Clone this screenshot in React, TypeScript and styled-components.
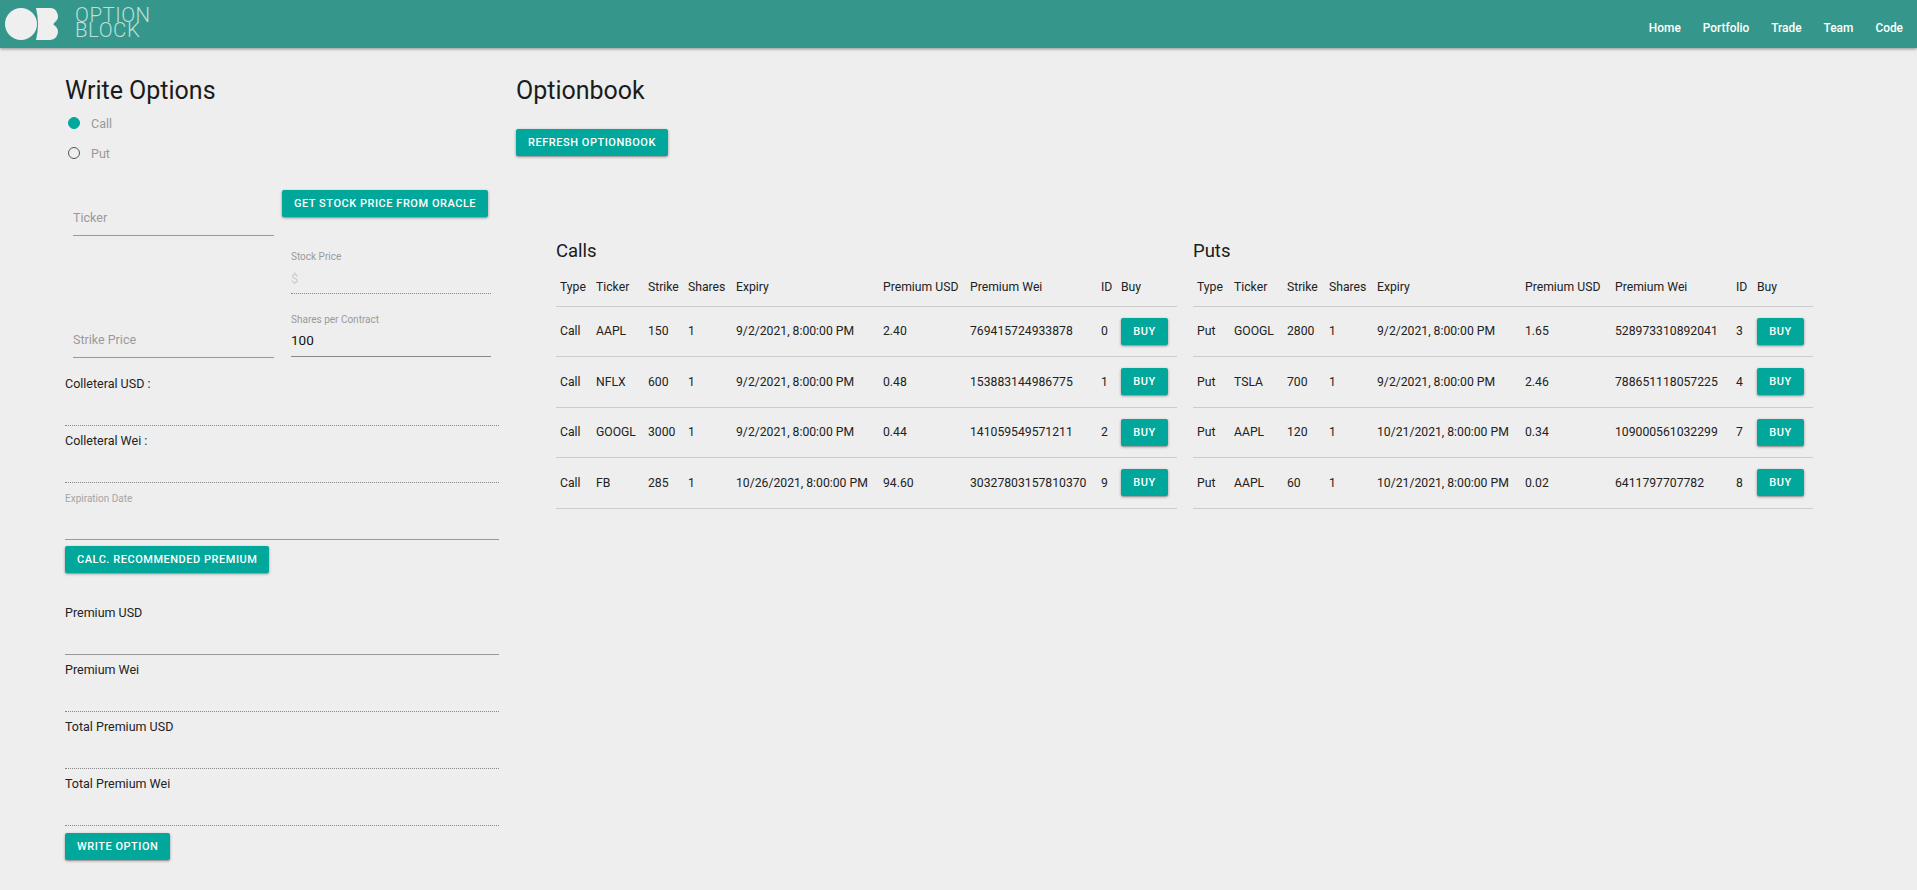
import React from 'react';
import styled, {createGlobalStyle} from "styled-components";

type OptionRow = {
    type: string
    ticker: string
    strike: string
    expiry: string
    usd: string
    wei: string
    id: number
}

const callRows: OptionRow[] = [
    {type: "Call", ticker: "AAPL", strike: "150", expiry: "9/2/2021, 8:00:00 PM", usd: "2.40", wei: "769415724933878", id: 0},
    {type: "Call", ticker: "NFLX", strike: "600", expiry: "9/2/2021, 8:00:00 PM", usd: "0.48", wei: "153883144986775", id: 1},
    {type: "Call", ticker: "GOOGL", strike: "3000", expiry: "9/2/2021, 8:00:00 PM", usd: "0.44", wei: "141059549571211", id: 2},
    {type: "Call", ticker: "FB", strike: "285", expiry: "10/26/2021, 8:00:00 PM", usd: "94.60", wei: "30327803157810370", id: 9},
]

const putRows: OptionRow[] = [
    {type: "Put", ticker: "GOOGL", strike: "2800", expiry: "9/2/2021, 8:00:00 PM", usd: "1.65", wei: "528973310892041", id: 3},
    {type: "Put", ticker: "TSLA", strike: "700", expiry: "9/2/2021, 8:00:00 PM", usd: "2.46", wei: "788651118057225", id: 4},
    {type: "Put", ticker: "AAPL", strike: "120", expiry: "10/21/2021, 8:00:00 PM", usd: "0.34", wei: "109000561032299", id: 7},
    {type: "Put", ticker: "AAPL", strike: "60", expiry: "10/21/2021, 8:00:00 PM", usd: "0.02", wei: "6411797707782", id: 8},
]

const callCols = [36, 52, 40, 48, 147, 87, 131, 20, 60]
const putCols = [37, 53, 42, 48, 148, 90, 121, 21, 60]
const headers = ["Type", "Ticker", "Strike", "Shares", "Expiry", "Premium USD", "Premium Wei", "ID", "Buy"]

const OptionTable: React.FC<{title: string, rows: OptionRow[], cols: number[]}> = ({title, rows, cols}) => {
    return (
        <TableBlock>
            <TableTitle>{title}</TableTitle>
            <StTable>
                <colgroup>
                    {cols.map((w, i) => <col key={i} style={{width: w}}/>)}
                </colgroup>
                <thead>
                <tr>
                    {headers.map(h => <HeadCell key={h}>{h}</HeadCell>)}
                </tr>
                </thead>
                <tbody>
                {rows.map(r => (
                    <tr key={r.id}>
                        <Cell>{r.type}</Cell>
                        <Cell>{r.ticker}</Cell>
                        <Cell>{r.strike}</Cell>
                        <Cell>1</Cell>
                        <Cell>{r.expiry}</Cell>
                        <Cell>{r.usd}</Cell>
                        <Cell>{r.wei}</Cell>
                        <Cell>{r.id}</Cell>
                        <Cell><BuyButton>Buy</BuyButton></Cell>
                    </tr>
                ))}
                </tbody>
            </StTable>
        </TableBlock>
    );
};

const App: React.FC = () => {
    return (
        <>
            <GlobalStyle/>
            <Header>
                <Brand>
                    <svg width="60" height="44" viewBox="0 0 60 44" fill="#efefef">
                        <circle cx="21" cy="22" r="16"/>
                        <path d="M36 6 H49.5 a8 8 0 0 1 5 14.5 q-1 1 -1 1.5 q0 .5 1 1.5 a8 8 0 0 1 -5 14.5 H36 q2 -8 2 -16 q0 -8 -2 -16 Z"/>
                    </svg>
                    <BrandText>OPTION<br/>BLOCK</BrandText>
                </Brand>
                <Nav>
                    <NavLink>Home</NavLink>
                    <NavLink>Portfolio</NavLink>
                    <NavLink>Trade</NavLink>
                    <NavLink>Team</NavLink>
                    <NavLink>Code</NavLink>
                </Nav>
            </Header>
            <Main>
                <WriteColumn>
                    <PageTitle>Write Options</PageTitle>
                    <RadioRow>
                        <RadioDot $checked/>
                        <RadioLabel>Call</RadioLabel>
                    </RadioRow>
                    <RadioRow>
                        <RadioDot/>
                        <RadioLabel>Put</RadioLabel>
                    </RadioRow>
                    <InputGrid>
                        <InputStack>
                            <InputField $height={45}><Placeholder>Ticker</Placeholder></InputField>
                            <InputField $height={45}><Placeholder>Strike Price</Placeholder></InputField>
                        </InputStack>
                        <ButtonStack>
                            <Button>Get Stock Price From Oracle</Button>
                            <SmallField $dotted>
                                <SmallLabel>Stock Price</SmallLabel>
                                <Adornment>$</Adornment>
                            </SmallField>
                            <SmallField>
                                <SmallLabel>Shares per Contract</SmallLabel>
                                <FieldValue>100</FieldValue>
                            </SmallField>
                        </ButtonStack>
                    </InputGrid>
                    <ResultField $dotted $first>Colleteral USD :</ResultField>
                    <ResultField $dotted>Colleteral Wei :</ResultField>
                    <DateField>Expiration Date</DateField>
                    <Button>Calc. Recommended Premium</Button>
                    <ResultField $afterButton>Premium USD</ResultField>
                    <ResultField $dotted>Premium Wei</ResultField>
                    <ResultField $dotted>Total Premium USD</ResultField>
                    <ResultField $dotted>Total Premium Wei</ResultField>
                    <FooterButton>Write Option</FooterButton>
                </WriteColumn>
                <BookColumn>
                    <PageTitle>Optionbook</PageTitle>
                    <RefreshButton>Refresh Optionbook</RefreshButton>
                    <Tables>
                        <OptionTable title="Calls" rows={callRows} cols={callCols}/>
                        <OptionTable title="Puts" rows={putRows} cols={putCols}/>
                    </Tables>
                </BookColumn>
            </Main>
        </>
    );
};

export default App;

const GlobalStyle = createGlobalStyle`
  html, body {
    margin: 0;
    padding: 0;
    background: #eeeeee;
    font-family: Roboto, "Liberation Sans", sans-serif;
    color: #1b1b1b;
  }

  * {
    box-sizing: border-box;
  }
`

const Header = styled.header`
  height: 48px;
  background: #35978b;
  box-shadow: 0 1px 3px rgba(0, 0, 0, .4);
  display: flex;
  justify-content: space-between;
  align-items: center;
  padding-right: 14px;
`
const Brand = styled.div`
  display: flex;
  align-items: center;
  gap: 15px;

  svg {
    filter: blur(.4px);
  }
`
const BrandText = styled.div`
  margin-top: -2px;
  font-size: 20.5px;
  font-weight: 300;
  letter-spacing: .5px;
  line-height: 15px;
  color: #bcdfd9;
`
const Nav = styled.nav`
  display: flex;
  gap: 22px;
  padding-top: 7px;
`
const NavLink = styled.span`
  font-size: 11.9px;
  font-weight: 500;
  color: #fff;
`

const Main = styled.main`
  display: flex;
  gap: 17px;
  padding: 0 0 31px 65px;
`
const WriteColumn = styled.section`
  width: 434px;
  flex: none;
  display: flex;
  flex-direction: column;
  align-items: flex-start;
`
const PageTitle = styled.h2`
  margin: 0;
  padding-top: 28px;
  height: 60px;
  font-size: 25px;
  line-height: 30px;
  font-weight: 400;
`
const RadioRow = styled.div`
  height: 30px;
  padding-left: 3px;
  display: flex;
  align-items: center;
  gap: 11px;
`
const RadioDot = styled.span<{ $checked?: boolean }>`
  width: 12px;
  height: 12px;
  border-radius: 50%;
  border: 1px solid ${p => p.$checked ? "#00a79a" : "#555"};
  background: ${p => p.$checked ? "#00a79a" : "transparent"};
`
const RadioLabel = styled.span`
  font-size: 12.5px;
  color: #999;
`
const InputGrid = styled.div`
  margin-top: 22px;
  display: flex;
  gap: 8px;
  padding-left: 8px;
  height: 168px;
`
const InputStack = styled.div`
  width: 201px;
  display: flex;
  flex-direction: column;
  justify-content: flex-end;
  gap: 77px;
`
const InputField = styled.div<{ $height: number }>`
  height: ${p => p.$height}px;
  border-bottom: 1px solid #999;
  display: flex;
  align-items: flex-end;
  padding-bottom: 10px;
`
const Placeholder = styled.span`
  font-size: 12.5px;
  color: #9a9a9a;
`
const ButtonStack = styled.div`
  width: 209px;
  display: flex;
  flex-direction: column;
  align-items: flex-start;
`
const SmallField = styled.div<{ $dotted?: boolean }>`
  width: 200px;
  height: 63px;
  margin-left: 9px;
  border-bottom: 1px ${p => p.$dotted ? "dotted" : "solid"} #888;
  display: flex;
  flex-direction: column;

  &:nth-child(2) {
    height: 77px;
    padding-top: 34px;
  }

  &:nth-child(3) {
    padding-top: 20px;
  }
`
const SmallLabel = styled.span`
  font-size: 10px;
  line-height: 12px;
  color: #9a9a9a;
`
const Adornment = styled.span`
  margin-top: 8px;
  font-size: 13px;
  line-height: 16px;
  color: #ccc;
`
const FieldValue = styled.span`
  margin-top: 6px;
  font-size: 13.5px;
  line-height: 16px;
  color: #111;
`
const ResultField = styled.div<{ $dotted?: boolean, $first?: boolean, $afterButton?: boolean }>`
  width: 434px;
  height: ${p => p.$first ? 68 : p.$afterButton ? 82 : 57}px;
  padding-top: ${p => p.$first ? 18 : p.$afterButton ? 32 : 7}px;
  border-bottom: 1px ${p => p.$dotted ? "dotted #888" : "solid #999"};
  font-size: 12.5px;
  line-height: 16px;
  color: #222;
`
const DateField = styled.div`
  width: 434px;
  height: 57px;
  padding-top: 10px;
  margin-bottom: 6px;
  border-bottom: 1px solid #999;
  font-size: 10px;
  line-height: 12px;
  color: #a5a5a5;
`
const Button = styled.button`
  height: 27px;
  padding: 0 12px;
  border: 0;
  border-radius: 2px;
  background: #00a79a;
  color: #fff;
  font-family: inherit;
  font-size: 11px;
  font-weight: 500;
  letter-spacing: .53px;
  text-transform: uppercase;
  white-space: nowrap;
  box-shadow: 0 1px 3px rgba(0, 0, 0, .35), 0 1px 1px rgba(0, 0, 0, .14);
`
const FooterButton = styled(Button)`
  margin-top: 7px;
`
const RefreshButton = styled(Button)`
  margin-top: 21px;
`
const BuyButton = styled(Button)`
  width: 47px;
  padding: 0;
  display: block;
`

const BookColumn = styled.section`
  flex: 1;
  min-width: 0;
`
const Tables = styled.div`
  margin-top: 55px;
  padding-left: 40px;
  display: flex;
  gap: 16px;
`
const TableBlock = styled.div`
  flex: none;
`
const TableTitle = styled.h3`
  margin: 0;
  height: 57px;
  padding-top: 29px;
  font-size: 18.5px;
  line-height: 22px;
  font-weight: 400;
`
const StTable = styled.table`
  border-collapse: collapse;
  table-layout: fixed;
  width: auto;
`
const HeadCell = styled.th`
  height: 38px;
  padding: 0 4px;
  text-align: left;
  font-size: 12.2px;
  font-weight: 400;
  color: #222;
  white-space: nowrap;
  border-bottom: 1px solid #ccc;
`
const Cell = styled.td`
  height: 50.5px;
  padding: 0 4px;
  font-size: 12.2px;
  color: #222;
  white-space: nowrap;
  border-bottom: 1px solid #ccc;
`
